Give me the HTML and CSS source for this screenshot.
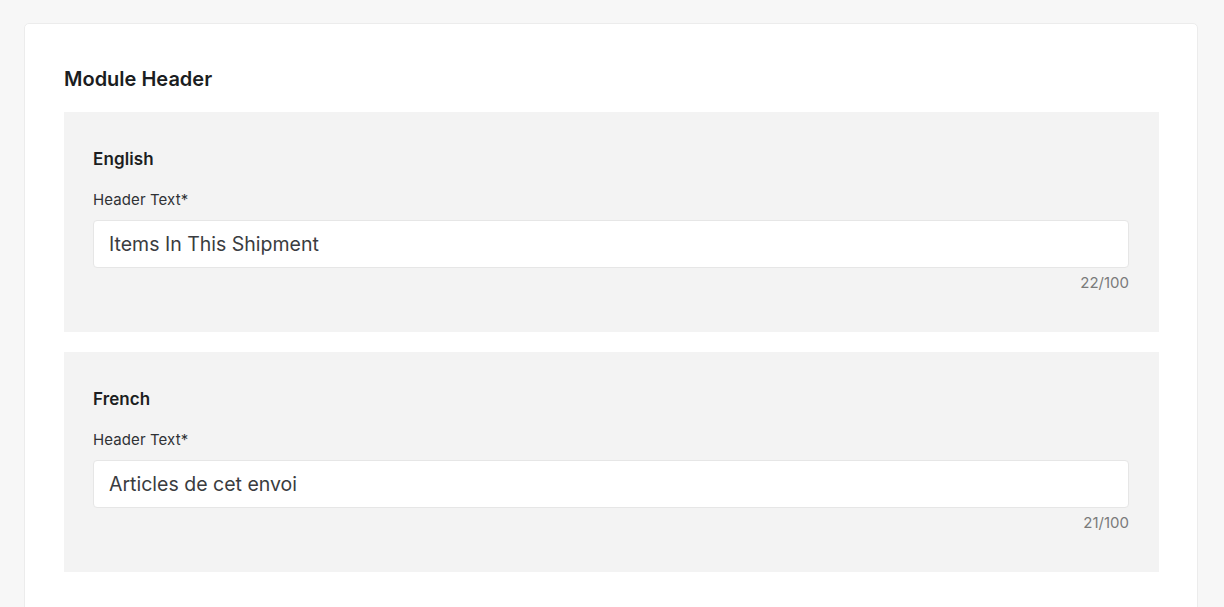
FILE: index.html
```html
<!DOCTYPE html>
<html>
	<head>
		<meta charset="utf-8" />
		<title>Module Header</title>
		<link rel="stylesheet" href="styles.css">
	</head>
	<body>
		<div class="card">
			<h2 class="card-title">Module Header</h2>
			<!--English-->
			<div class="lang">
				<h3 class="lang-title">English</h3>
				<label class="field-label" for="en">Header Text*</label>
				<input class="field-input" type="text" id="en" value="Items In This Shipment" />
				<div class="field-count">22/100</div>
			</div>
			<!--French-->
			<div class="lang">
				<h3 class="lang-title">French</h3>
				<label class="field-label" for="fr">Header Text*</label>
				<input class="field-input" type="text" id="fr" value="Articles de cet envoi" />
				<div class="field-count">21/100</div>
			</div>
		</div>
	</body>
</html>
```

FILE: styles.css
```css
*{
	margin: 0;
	padding: 0;
	box-sizing: border-box;
}
body {
	background: #f7f7f7;
	font-family: Inter, "Noto Sans", sans-serif;
	color: #1b1d21;
	padding: 23px 26px 0 24px;
	overflow: hidden;
}
.card {
	background: #fff;
	border: 1px solid #ececec;
	border-radius: 5px;
	padding: 41px 38px 40px 39px;
	display: flex;
	flex-direction: column;
	gap: 20px;
}
.card-title {
	font-size: 20px;
	line-height: 28px;
	font-weight: 600;
	margin-bottom: -1px;
}
.lang {
	background: #f3f3f3;
	padding: 35px 30px 39px 29px;
	display: flex;
	flex-direction: column;
}
.lang-title {
	font-size: 17px;
	line-height: 24px;
	font-weight: 600;
	letter-spacing: 0.1px;
	margin-bottom: 19px;
}
.field-label {
	font-size: 15px;
	line-height: 20px;
	letter-spacing: 0.1px;
	color: #2f3135;
	margin-bottom: 10px;
}
.field-input {
	height: 48px;
	border: 1px solid #e6e6e6;
	border-radius: 4px;
	background: #fff;
	padding: 0 15px;
	font-family: inherit;
	font-size: 19.5px;
	color: #3a3c40;
	outline: none;
}
.field-count {
	margin-top: 5px;
	text-align: right;
	font-size: 15px;
	line-height: 20px;
	color: #7a7a7a;
}
```
